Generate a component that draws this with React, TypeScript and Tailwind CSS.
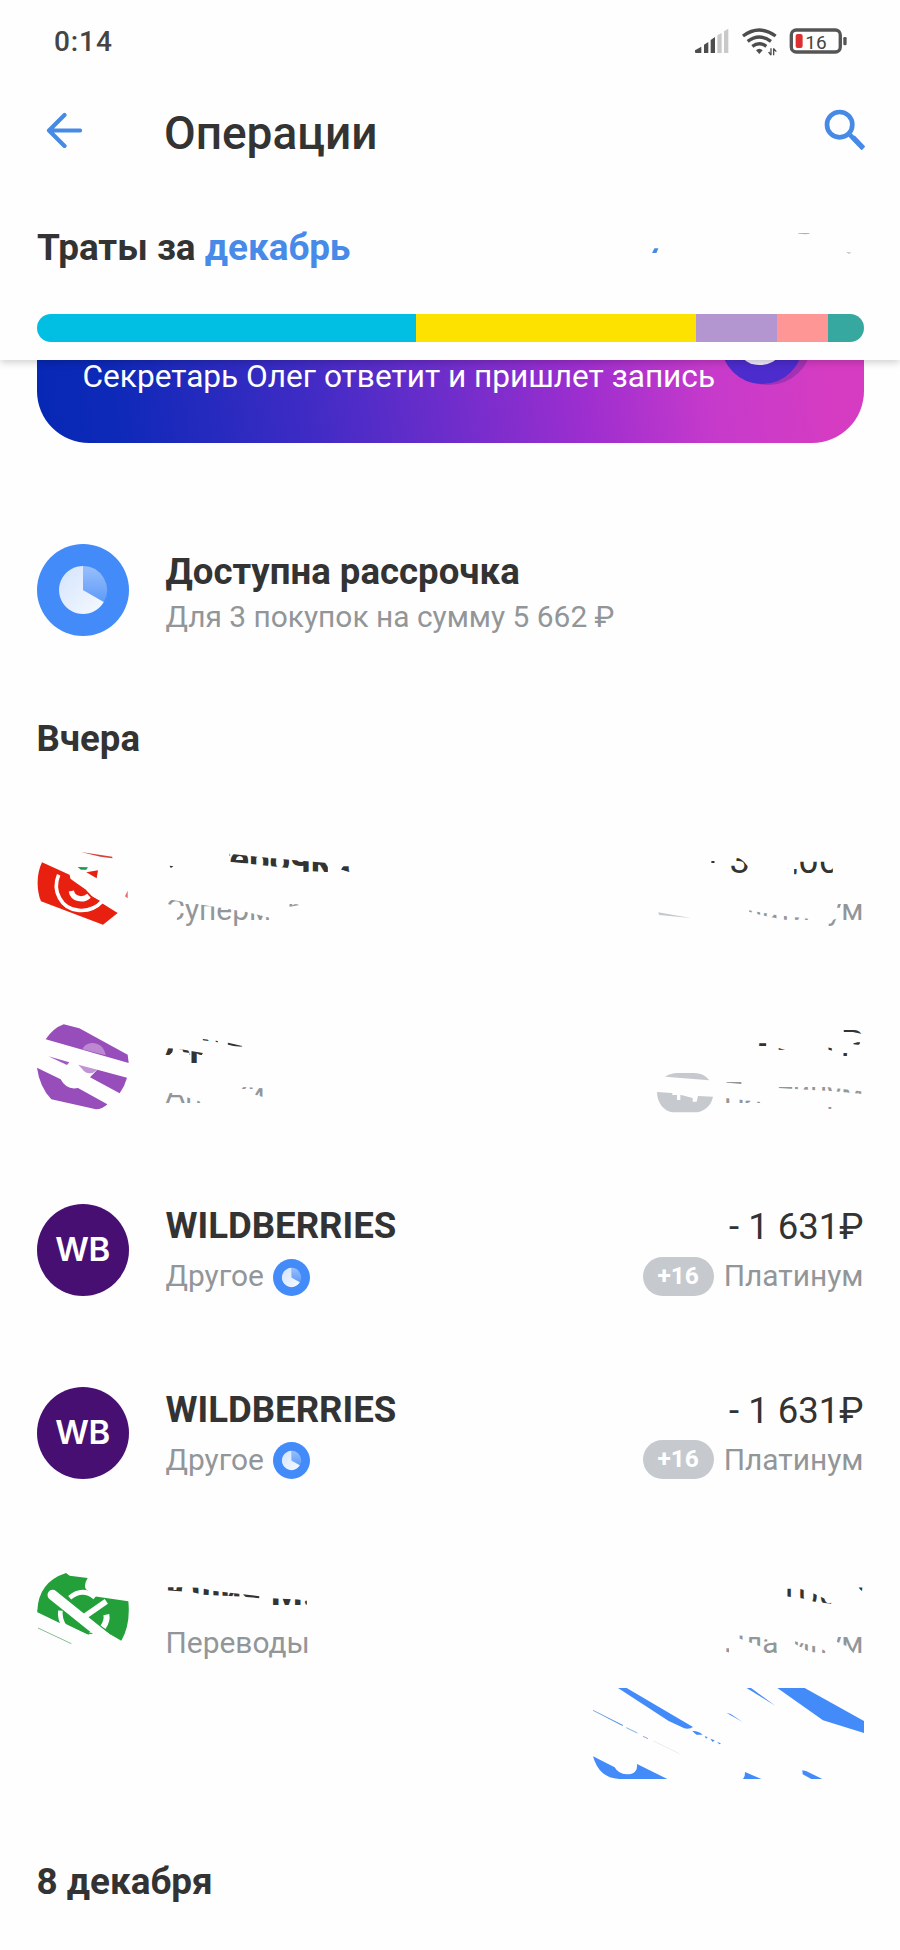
import type { ReactNode } from "react";

/** Slices are given in thirds of a pixel, relative to the origin (ox, oy). */
function slices(ox: number, oy: number, shapes: number[][]): string {
  const d = shapes
    .map((pts) => {
      let s = "";
      for (let i = 0; i < pts.length; i += 2) {
        s += `${i ? "L" : "M"}${((pts[i] - ox) / 3).toFixed(2)} ${((pts[i + 1] - oy) / 3).toFixed(2)}`;
      }
      return s + "Z";
    })
    .join("");
  return `path("${d}")`;
}

function Cut({ ox, oy, shapes, className, children }: { ox: number; oy: number; shapes: number[][]; className: string; children: ReactNode }) {
  return (
    <div className={className} style={{ clipPath: slices(ox, oy, shapes) }}>
      {children}
    </div>
  );
}

function PieIcon({ className, r = 24 }: { className: string; r?: number }) {
  return (
    <svg viewBox="0 0 92 92" className={className}>
      <defs>
        <linearGradient id="pie" x1="0" y1="0" x2="1" y2="1">
          <stop offset="0" stopColor="#d3e3fd" />
          <stop offset="1" stopColor="#f6faff" />
        </linearGradient>
        <linearGradient id="wedge" x1="0" y1="0" x2="0" y2="1">
          <stop offset="0" stopColor="#98bffb" />
          <stop offset="1" stopColor="#5f9bf8" />
        </linearGradient>
      </defs>
      <circle cx="46" cy="46" r="46" fill="#428bf9" />
      <g transform={`translate(46 46) scale(${r / 24})`}>
        <path d="M0 0V-24A24 24 0 0 1 20.8 12Z" fill="url(#wedge)" />
        <path d="M0 0V-24A24 24 0 1 0 20.8 12Z" fill="url(#pie)" />
      </g>
    </svg>
  );
}

function Row({ icon, title, sub, amount, account }: { icon: ReactNode; title: ReactNode; sub: ReactNode; amount: ReactNode; account: ReactNode }) {
  return (
    <div className="flex h-[183.3px] items-center">
      <div className="mr-[37px] size-[92px] shrink-0">{icon}</div>
      <div className="flex grow flex-col items-start gap-[9px]">
        {title}
        <div className="flex h-[40px] items-center gap-[9px]">{sub}</div>
      </div>
      <div className="flex flex-col items-end gap-[9px]">
        {amount}
        <div className="flex h-[40px] items-center">{account}</div>
      </div>
    </div>
  );
}

const titleCls = "h-[44px] text-[36.6px] leading-[46px] font-bold whitespace-nowrap text-[#333333]";
const subCls = "h-[40px] text-[29.900px] leading-[40px] whitespace-nowrap text-[#929699]";
const amountCls = "h-[44px] text-[36.5px] leading-[47px] whitespace-nowrap text-[#333333]";

function Wildberries() {
  return (
    <Row
      icon={
        <div className="flex size-[92px] items-center justify-center rounded-full bg-[#480f73] font-[Inter,sans-serif] text-[33px] font-semibold tracking-[-0.5px] text-white">
          WB
        </div>
      }
      title={<div className={titleCls}>WILDBERRIES</div>}
      sub={
        <>
          <span className={subCls}>Другое</span>
          <PieIcon className="mt-[2px] size-[37px]" />
        </>
      }
      amount={<div className={amountCls}>- 1 631₽</div>}
      account={
        <>
          <span className="mr-[10px] flex h-[39px] w-[71px] items-center justify-center rounded-full bg-[#c6cace] text-[24.500px] font-bold text-white">+16</span>
          <span className={subCls}>Платинум</span>
        </>
      }
    />
  );
}

function StatusIcons() {
  return (
    <svg viewBox="285 80 460 90" className="h-[30px] w-[153.3px]">
      <g fill="#4d4d4d">
        <path d="M285 156V150L304 139V158H287Z" />
        <path d="M312 133L325 125V158H312Z" />
        <path d="M332 119L345 110V158H332Z" />
        <path d="M352 105L365 98V158H352Z" fill="#c9c9c9" />
        <path d="M372 93L385 85V158H372Z" fill="#c9c9c9" />
      </g>
      <g fill="none" stroke="#4d4d4d" strokeWidth="10">
        <path d="M429 107Q478 71 527 107" />
        <path d="M443 123Q478 97 513 123" />
        <path d="M457 138Q478 122 499 138" />
      </g>
      <path d="M468 150Q478 141 488 150L478 161Z" fill="#4d4d4d" />
      <path d="M513 144V165M521 144V165M506 155L513 164M521 145L529 154" stroke="#4d4d4d" strokeWidth="4" fill="none" />
      <rect x="574" y="89" width="147" height="66" rx="15" fill="none" stroke="#555" strokeWidth="10" />
      <rect x="587" y="101" width="21" height="42" rx="6" fill="#dd2f2f" />
      <rect x="730" y="110" width="10" height="25" rx="4" fill="#555" />
      <text x="616" y="145" fontSize="57" fill="#444" className="font-[Roboto,sans-serif]">16</text>
    </svg>
  );
}

export default function App() {
  return (
    <div className="h-[1950px] w-[900px] overflow-hidden bg-[#fefefe] font-[Roboto,sans-serif] text-[#333333]">
      <header className="relative z-10 h-[360px] bg-[#fefefe] shadow-[0_2px_8px_rgba(0,0,0,0.2)]">
        <div className="flex h-[84px] justify-between pt-[25px] pr-[52px] pl-[54px]">
          <span className="text-[28px] leading-[34px] font-medium tracking-[0.9px] text-[#444]">0:14</span>
          <div className="pt-[2px]">
            <StatusIcons />
          </div>
        </div>
        <div className="flex h-[141px] items-start pr-[35px] pl-[46px]">
          <svg viewBox="0 0 36 36" className="mt-[28px] h-[36px] w-[36px]" fill="none" stroke="#478ae6" strokeWidth="4.200" strokeLinecap="round" strokeLinejoin="round">
            <path d="M34 18.500H3M18.500 3L3 18.500L18.500 34" />
          </svg>
          <h1 className="ml-[82px] grow pt-[23px] text-[46px] leading-[52px] font-medium">Операции</h1>
          <svg viewBox="670 328 124 124" className="mt-[25px] size-[41.3px]" fill="none" stroke="#478ae6">
            <circle cx="717" cy="375" r="38" strokeWidth="14" />
            <path d="M748 406L788 447" strokeWidth="14" />
            <path d="M757 413L788 445" strokeWidth="15" />
          </svg>
        </div>
        <div className="flex h-[89px] items-start justify-between pr-[36px] pl-[37px]">
          <h2 className="text-[36.900px] leading-[45px] font-bold">
            Траты за <span className="text-[#478ae8]">декабрь</span>
          </h2>
          <svg viewBox="154 675 638 100" className="h-[33.3px] w-[212.6px]">
            <path d="M164 745H176L170 759H157Z" fill="#478ae6" />
            <path d="M594 699L630 699V701L618 703L598 701Z" fill="#a9b5b0" />
            <path d="M740 756L756 758L748 761Z" fill="#a9b5b0" />
          </svg>
        </div>
        <div className="mx-[36.5px] flex h-[28px] overflow-hidden rounded-full">
          <div className="w-[379.500px] bg-[#00bfe3]" />
          <div className="w-[280px] bg-[#fde200]" />
          <div className="w-[81px] bg-[#b396cf]" />
          <div className="w-[51px] bg-[#ff9696]" />
          <div className="grow bg-[#36a89f]" />
        </div>
      </header>

      <main className="px-[36.5px]">
        <section className="relative h-[83px] overflow-hidden rounded-b-[52px] bg-[linear-gradient(82deg,#0628b4_0%,#0e29b8_10%,#3d2bc4_32%,#6c2dcb_49%,#9e2ecf_66%,#c63acb_81%,#d63cc2_96%)]">
          <svg viewBox="0 0 120 40" className="absolute top-0 right-[21px] h-[40px] w-[120px]">
            <ellipse cx="45" cy="-16" rx="43" ry="41" fill="#61229e" opacity=".4" />
            <ellipse cx="39" cy="-17" rx="41" ry="41" fill="#4c2ccc" />
            <ellipse cx="37" cy="-6" rx="18" ry="11" fill="#eee9fa" />
          </svg>
          <p className="relative pt-px pl-[46px] text-[31.600px] leading-[32px] whitespace-nowrap text-white">Секретарь Олег ответит и пришлет запись</p>
        </section>

        <section className="flex h-[273px] items-start pt-[101px]">
          <PieIcon className="mr-[37px] size-[92px]" />
          <div className="flex flex-col gap-[4px] pt-[5px]">
            <h2 className={titleCls}>Доступна рассрочка</h2>
            <p className={subCls}>Для 3 покупок на сумму 5 662 ₽</p>
          </div>
        </section>

        <h2 className="h-[75.5px] text-[36.600px] leading-[45px] font-bold">Вчера</h2>

        <Row
          icon={
            <svg viewBox="110 21 276 276" className="size-[92px]">
              <path d="M125 97L242 150L298 215L352 249L308 284L122 214C108 180 108 132 125 97Z" fill="#e8200f" />
              <path d="M242 66L336 80V85L300 80Z" fill="#d7423a" />
              <path d="M232 111L263 112L258 119H242Z" fill="#1d9850" />
              <path d="M258 127L293 121L289 145Z" fill="#e8200f" />
              <path d="M374 199L382 182V205Z" fill="#e46a60" />
              <path d="M210 145L222 165L236 179L257 180L275 199L303 216L280 180L250 145L205 120Z" fill="#fff" />
              <path d="M211 147L258 180L252 189L224 178L208 160Z" fill="#e8200f" />
              <path d="M257 184L275 200L300 213L283 225Q266 213 257 184Z" fill="#e8200f" />
              <path d="M175 134C155 181 181 237 235 241C266 244 291 230 307 213" fill="none" stroke="#fff" strokeWidth="11" />
              <path d="M213 183C217 207 247 214 266 197" fill="none" stroke="#fff" strokeWidth="16" />
            </svg>
          }
          title={
            <Cut ox={498} oy={19} className={titleCls} shapes={[[690, 70, 760, 78, 870, 88, 985, 98, 985, 126, 940, 123, 910, 126, 860, 112, 780, 104, 690, 94], [1030, 108, 1052, 108, 1052, 126, 1025, 118], [510, 106, 522, 108, 514, 113]]}>
              Пятерочка
            </Cut>
          }
          sub={
            <Cut ox={498} oy={178} className={subCls} shapes={[[500, 205, 552, 215, 650, 230, 740, 245, 810, 262, 810, 270, 740, 290, 530, 288, 536, 228, 500, 220], [865, 214, 900, 224, 880, 228, 865, 230]]}>
              Супермаркеты
            </Cut>
          }
          amount={
            <Cut ox={312} oy={19} className={amountCls + " w-[160px] text-right"} shapes={[[372, 98, 396, 86, 416, 82, 426, 88, 434, 95, 462, 128, 372, 132], [564, 112, 576, 122, 572, 127], [584, 94, 700, 94, 700, 132, 584, 132], [335, 92, 345, 92, 345, 99, 335, 99]]}>
              - 300,00₽
            </Cut>
          }
          account={
            <>
              <svg viewBox="170 200 198 90" className="h-[30px] w-[66px]">
                <path d="M171 252L268 269L173 260Z" fill="#c6cace" />
              </svg>
              <Cut ox={369} oy={178} className={subCls} shapes={[[445, 240, 520, 253, 630, 266, 630, 269, 550, 268, 480, 254, 445, 244], [725, 215, 792, 215, 792, 275, 725, 275], [683, 275, 712, 262, 704, 288, 683, 288], [708, 218, 722, 218, 718, 232, 708, 232]]}>
                Платинум
              </Cut>
            </>
          }
        />

        <Row
          icon={
            <svg viewBox="110 572 276 276" className="size-[92px]">
              <path d="M136 630Q159 596 190 585L237 597L382 676L385 701Z" fill="#974dba" />
              <path d="M246 660C257 630 311 634 316 678Z" fill="#bb88d1" />
              <path d="M144 681L207 699L200 707Z" fill="#a15bc0" />
              <path d="M234 706L291 721L278 730Q258 736 246 720Z" fill="#c195d5" />
              <path d="M291 721L380 745Q373 771 358 792L269 744Z" fill="#974dba" />
              <path d="M110 715L181 750Q198 783 233 776L321 825Q306 840 287 840L153 810Q118 773 110 715Z" fill="#974dba" />
            </svg>
          }
          title={
            <Cut ox={498} oy={569} className={titleCls} shapes={[[490, 653, 520, 655, 520, 665, 505, 678, 490, 678], [540, 656, 610, 668, 595, 700, 570, 700, 570, 668, 540, 664], [610, 626, 655, 632, 655, 636, 610, 630], [670, 634, 728, 647, 728, 652, 705, 648, 670, 640]]}>
              Артека
            </Cut>
          }
          sub={
            <Cut ox={498} oy={728} className={subCls} shapes={[[490, 785, 525, 790, 565, 802, 605, 815, 605, 821, 490, 821], [725, 770, 760, 772, 790, 774, 790, 800, 765, 793, 765, 776, 725, 776]]}>
              Аптеки
            </Cut>
          }
          amount={
            <Cut ox={312} oy={569} className={amountCls + " w-[160px] text-right"} shapes={[[468, 635, 500, 635, 500, 650, 468, 650], [520, 648, 570, 663, 570, 677, 556, 675, 556, 662, 520, 658], [660, 646, 700, 655, 700, 662, 660, 650], [732, 595, 792, 597, 792, 612, 760, 605, 732, 605], [730, 668, 745, 668, 745, 679, 730, 679], [762, 636, 782, 636, 780, 644, 762, 642]]}>
              - 441₽
            </Cut>
          }
          account={
            <>
              <svg viewBox="169 729 168 120" className="mr-[11px] h-[40px] w-[56px]">
                <path d="M193 740Q211 729 230 729H280Q310 729 326 751Z" fill="#c6cace" />
                <path d="M169 786L215 789V795H229V810H239V794L276 804V815H288L292 798L337 800C331 830 308 847 280 847H214C191 843 169 820 169 786Z" fill="#c6cace" />
              </svg>
              <Cut ox={369} oy={728} className={subCls} shapes={[[373, 749, 422, 754, 422, 761, 373, 757], [372, 804, 380, 804, 480, 815, 480, 821, 372, 821], [533, 767, 660, 768, 785, 784, 785, 791, 700, 783, 580, 776, 533, 773], [682, 830, 692, 830, 692, 836, 682, 836]]}>
                Платинум
              </Cut>
            </>
          }
        />

        <Wildberries />
        <Wildberries />

        <div className="h-[163.5px]">
          <Row
            icon={
              <svg viewBox="110 63 276 276" className="size-[92px]">
                <path d="M111 186Q114 99 197 72L208 80L262 87Q249 108 257 121L281 142L384 157Q391 227 363 275L320 250L263 219L289 201L295 200L264 258L186 220Z" fill="#23a03a" />
                <path d="M262 256L320 250L363 275L300 235Z" fill="#23a03a" />
                <path d="M111 184L186 215L186 226L111 190Z" fill="#23a03a" />
                <path d="M157 138L254 216L315 265" stroke="#fff" strokeWidth="31" strokeLinecap="round" fill="none" />
                <path d="M208 146Q246 114 284 145" stroke="#fff" strokeWidth="14" fill="none" />
                <path d="M180 185Q178 208 190 229" stroke="#fff" strokeWidth="14" fill="none" />
                <path d="M252 203L318 157" stroke="#fff" strokeWidth="17" fill="none" />
                <path d="M318 197Q322 215 308 235" stroke="#fff" strokeWidth="18" fill="none" />
                <path d="M189 224L264 257L288 274L214 272Z" fill="#fff" />
                <path d="M113 237L213 284" stroke="#4d9b5b" strokeWidth="2" fill="none" />
              </svg>
            }
            title={
              <Cut ox={498} oy={61} className={titleCls} shapes={[[498, 113, 550, 113, 550, 126, 498, 122], [570, 114, 600, 115, 640, 124, 780, 140, 780, 146, 720, 141, 610, 136, 570, 126], [815, 146, 895, 150, 922, 154, 922, 176, 815, 174]]}>
                Юлия М.
              </Cut>
            }
            sub={<span className={subCls}>Переводы</span>}
            amount={
              <Cut ox={402} oy={61} className={amountCls + " w-[160px] text-right"} shapes={[[640, 118, 690, 118, 720, 126, 785, 157, 785, 163, 735, 157, 700, 147, 636, 139], [867, 114, 882, 114, 880, 128]]}>
                - 1 100₽
              </Cut>
            }
            account={
              <Cut ox={459} oy={219} className={subCls} shapes={[[460, 295, 475, 295, 475, 308, 460, 304], [500, 256, 566, 262, 590, 270, 620, 280, 620, 312, 575, 312, 570, 290, 500, 264], [672, 274, 735, 290, 770, 306, 770, 312, 715, 306, 672, 282], [798, 260, 880, 260, 880, 312, 850, 312, 830, 290, 798, 276]]}>
                Платинум
              </Cut>
            }
          />
        </div>

        <div className="flex h-[171px] justify-end">
          <svg viewBox="69 414 813 273" className="h-[91px] w-[271px]" fill="#428bf9">
            <path d="M144 414H170L369 531Q359 538 343 535L296 513Z" />
            <path d="M69 481L160 526L154 526Z" />
            <path d="M69 481L159 527M169 533L202 549M219 559L234 566" stroke="#6ba0df" strokeWidth="2.500" />
            <path d="M250 573L328 611" stroke="#dce6ee" strokeWidth="2" />
            <path d="M367 543Q383 541 398 554L379 554Z" />
            <path d="M404 559L413 561L408 566ZM421 566L434 571L428 576ZM441 576L453 580L448 583Z" />
            <path d="M530 414H543L616 467Z" />
            <path d="M469 488L482 492L518 516Z" />
            <path d="M622 414H704L882 513V549L759 511Z" />
            <path d="M69 619L134 652Q145 672 170 673Q204 673 201 642L292 687H147Q87 684 69 619Z" />
            <path d="M525 666L574 687H519Q526 679 525 666Z" />
            <path d="M697 661L708 663L757 687H724L698 673Z" />
          </svg>
        </div>

        <h2 className="text-[36.900px] leading-[45px] font-bold">8 декабря</h2>
      </main>
    </div>
  );
}
